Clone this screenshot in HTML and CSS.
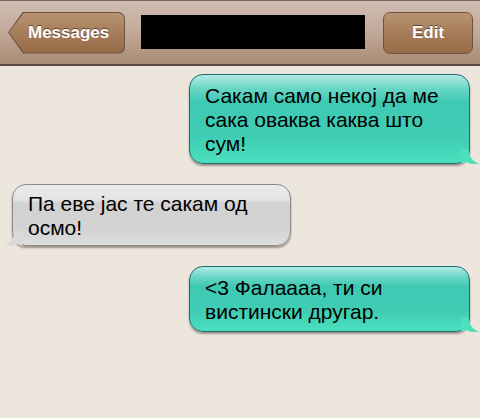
FILE: index.html
```html
<!DOCTYPE html>
<html lang="mk">
<head>
    <meta charset="UTF-8">
    <meta name="viewport" content="width=device-width, initial-scale=1.0">
    <title>Messages</title>
    <link rel="stylesheet" href="styles.css">
</head>
<body>
    <div class="header">
        <div class="back"><span class="back-inner">Messages</span></div>
        <div class="title"></div>
        <div class="edit">Edit</div>
    </div>

    <div class="thread">
        <div class="bubble sent">Сакам само некој да ме сака оваква каква што сум!</div>
        <div class="bubble received">Па еве јас те сакам од осмо!</div>
        <div class="bubble sent">&lt;3 Фалаааа, ти си вистински другар.</div>
    </div>
</body>
</html>
```

FILE: styles.css
```css
body {
    margin: 0;
    height: 418px;
    background-color: #ede6dd;
    font-family: "Liberation Sans", Arial, sans-serif;
    overflow: hidden;
}

.header {
    height: 63px;
    display: flex;
    align-items: center;
    padding: 0 7px 0 8px;
    border-top: 1px solid #7a665c;
    border-bottom: 2px solid #5b4b42;
    background: linear-gradient(to bottom, #d0bdb1 0%, #c3ab9c 45%, #a98b74 100%);
}

.back {
    width: 117px;
    height: 42px;
    background-color: #6e5240;
    border-radius: 0 7px 7px 0;
    clip-path: polygon(0 50%, 15px 0, 100% 0, 100% 100%, 15px 100%);
    position: relative;
}

.back-inner {
    position: absolute;
    inset: 1px 1px 1px 1px;
    border-radius: 0 6px 6px 0;
    clip-path: polygon(0 50%, 15px 0, 100% 0, 100% 100%, 15px 100%);
    background: linear-gradient(to bottom, #b89474 0%, #a57c59 50%, #976b47 100%);
    color: #fff;
    font-weight: bold;
    font-size: 17px;
    display: flex;
    align-items: center;
    padding-left: 19px;
    text-shadow: 0 -1px 0 #5d4130;
}

.title {
    width: 224px;
    height: 34px;
    margin-left: 16px;
    margin-bottom: 2px;
    background-color: #000;
}

.edit {
    width: 88px;
    height: 40px;
    margin-left: 18px;
    border: 1px solid #6e5240;
    border-radius: 7px;
    background: linear-gradient(to bottom, #b89474 0%, #a57c59 50%, #976b47 100%);
    color: #fff;
    font-weight: bold;
    font-size: 17px;
    display: flex;
    align-items: center;
    justify-content: center;
    text-shadow: 0 -1px 0 #5d4130;
}

.thread {
    display: flex;
    flex-direction: column;
    padding: 8px 10px 0 12px;
    gap: 20px;
}

.bubble {
    position: relative;
    width: 250px;
    padding: 9px 14px 7px 15px;
    font-size: 21px;
    line-height: 24px;
    color: #000;
    border-radius: 14px;
}

.sent {
    align-self: flex-end;
    border: 1px solid #1f6b74;
    background: linear-gradient(to bottom, #b3ebe3 0%, #6fd8c8 14%, #3ec9b3 30%, #3fcdb4 70%, #4ce0bf 100%);
    box-shadow: 0 2px 2px rgba(60, 50, 40, 0.45);
}

.sent::after {
    content: "";
    position: absolute;
    right: -10px;
    bottom: -1px;
    width: 18px;
    height: 15px;
    background: #4ce0bf;
    clip-path: path("M0 0 L7 0 Q8 11 18 15 Q11 16 5 13 Q2 14 0 15 Z");
}

.received {
    align-self: flex-start;
    width: 248px;
    padding-top: 7px;
    padding-bottom: 5px;
    border: 1px solid #8a8a8a;
    background: linear-gradient(to bottom, #ebebeb 0%, #e3e3e3 25%, #d2d2d2 30%, #d3d3d3 75%, #dedede 100%);
    box-shadow: 0 2px 2px rgba(60, 50, 40, 0.45);
}

.received::after {
    content: "";
    position: absolute;
    left: -9px;
    bottom: -1px;
    width: 18px;
    height: 15px;
    background: #dadada;
    clip-path: path("M18 0 L11 0 Q10 11 0 15 Q7 16 13 13 Q16 14 18 15 Z");
}
```
